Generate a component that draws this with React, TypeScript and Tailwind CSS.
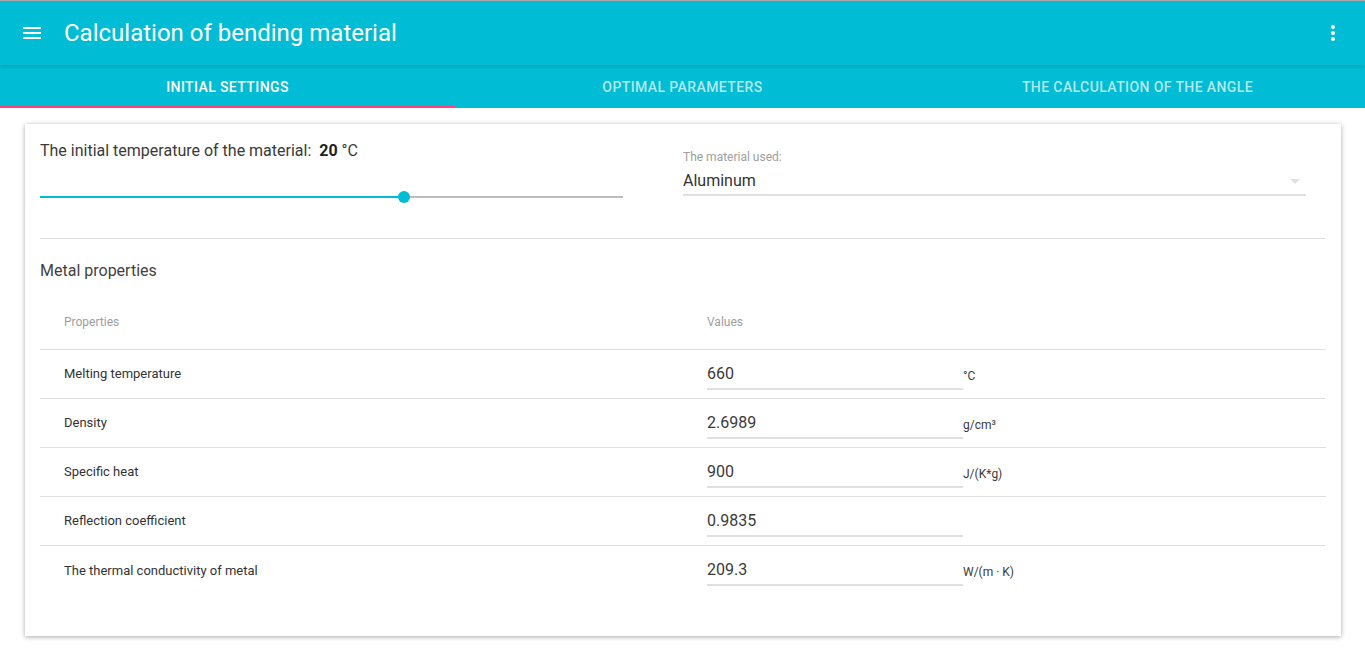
import React, { useState } from 'react';

const properties = [
  { name: 'Melting temperature', value: '660', unit: '°C' },
  { name: 'Density', value: '2.6989', unit: 'g/cm³' },
  { name: 'Specific heat', value: '900', unit: 'J/(K*g)' },
  { name: 'Reflection coefficient', value: '0.9835', unit: '' },
  { name: 'The thermal conductivity of metal', value: '209.3', unit: 'W/(m · K)' },
];

const tabs = ['INITIAL SETTINGS', 'OPTIMAL PARAMETERS', 'THE CALCULATION OF THE ANGLE'];

const App = () => {
  const [activeTab, setActiveTab] = useState(0);

  return (
    <div className="min-h-screen bg-white font-['Roboto','Liberation_Sans',sans-serif] text-[#212121]">
      {/* App bar */}
      <header className="border-t border-[#a9a9a9] bg-[#00bcd4] text-white">
        <div className="flex h-[64px] items-center shadow-[0_2px_3px_rgba(0,0,0,0.12)]">
          <button className="ml-[20px] flex h-6 w-6 items-center justify-center">
            <svg width="18" height="12" viewBox="0 0 18 12" fill="white">
              <rect x="0" y="0" width="18" height="2" />
              <rect x="0" y="5" width="18" height="2" />
              <rect x="0" y="10" width="18" height="2" />
            </svg>
          </button>
          <h1 className="ml-[20px] text-[24px] font-normal leading-none">Calculation of bending material</h1>
          <div className="flex-1" />
          <button className="mr-[20px] flex h-6 w-6 items-center justify-center">
            <svg width="4" height="16" viewBox="0 0 4 16" fill="white">
              <circle cx="2" cy="2" r="2" />
              <circle cx="2" cy="8" r="2" />
              <circle cx="2" cy="14" r="2" />
            </svg>
          </button>
        </div>
        <nav className="flex h-[43px]">
          {tabs.map((tab, i) => (
            <button
              key={tab}
              onClick={() => setActiveTab(i)}
              className={`relative flex-1 pt-[1px] text-[14px] font-medium tracking-[0.4px] ${i === activeTab ? 'text-white' : 'text-white/70'}`}
            >
              {tab}
              {i === activeTab && <span className="absolute bottom-0 left-0 h-[2px] w-full bg-[#ff4081]" />}
            </button>
          ))}
        </nav>
      </header>

      {/* Card */}
      <main className="ml-[25px] mr-[24px] mt-[16px] bg-white px-[15px] pb-[41px] pt-[17px] shadow-[0_1px_6px_rgba(0,0,0,0.12),0_1px_4px_rgba(0,0,0,0.24)]">
        <div className="flex">
          <div className="w-[583px]">
            <p className="text-[16px] leading-[20px] text-[#3a3a3a]">
              The initial temperature of the material:&nbsp; <b className="font-bold text-[#212121]">20</b> °C
            </p>
            <div className="relative mt-[35px] h-[2px] bg-[#bdbdbd]">
              <div className="h-[2px] w-[364px] bg-[#00bcd4]" />
              <span className="absolute left-[358px] top-[-5px] h-3 w-3 rounded-full bg-[#00bcd4]" />
            </div>
          </div>
          <div className="ml-[60px] w-[623px] pt-[9px]">
            <label className="block text-[12px] leading-[14px] text-[#9e9e9e]">The material used:</label>
            <div className="flex items-center justify-between border-b-2 border-[#e0e0e0] pb-[3px] pt-[7px]">
              <span className="text-[16px] leading-[20px] text-[#333]">Aluminum</span>
              <span className="mr-[6px] h-0 w-0 border-x-[5px] border-t-[5px] border-x-transparent border-t-[#e0e0e0]" />
            </div>
          </div>
        </div>

        <div className="mt-[40px] h-px bg-[#e0e0e0]" />

        <h2 className="mt-[23px] text-[16px] leading-[18px] text-[#424242]">Metal properties</h2>

        {/* Properties table */}
        <div className="mt-[14px]">
          <div className="grid h-[56px] grid-cols-[667px_1fr] items-center border-b border-[#e0e0e0] text-[12px] text-[#9e9e9e]">
            <span className="pl-[24px]">Properties</span>
            <span>Values</span>
          </div>
          {properties.map((p, i) => (
            <div
              key={p.name}
              className={`grid h-[49px] grid-cols-[667px_1fr] ${i < properties.length - 1 ? 'border-b border-[#e0e0e0]' : ''}`}
            >
              <span className="self-center pl-[24px] text-[13px] text-[#333]">{p.name}</span>
              <div className="flex items-end self-start">
                <div className="mt-[14px] w-[256px] border-b-2 border-[#e0e0e0] pb-[4px] text-[16px] leading-[20px] text-[#3a3a3a]">
                  {p.value}
                </div>
                <span className="mb-[5px] text-[12px] text-[#3a3a3a]">{p.unit}</span>
              </div>
            </div>
          ))}
        </div>
      </main>
    </div>
  );
};

export default App;
